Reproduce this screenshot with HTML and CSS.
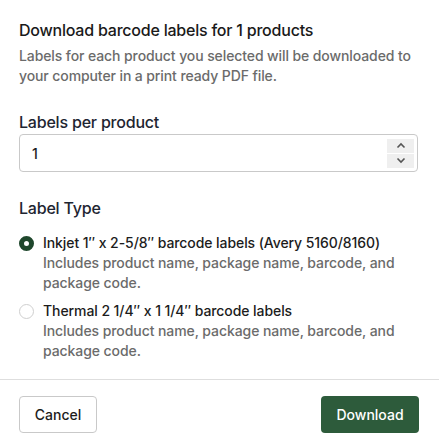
FILE: index.html
```html
<!DOCTYPE html>
<html lang="en">
<head>
  <meta charset="UTF-8" />
  <title>Download barcode labels</title>
  <link rel="stylesheet" href="styles.css">
</head>
<body>

  <div class="modal-body">
    <h2 class="title">Download barcode labels for 1 products</h2>
    <p class="subtitle">Labels for each product you selected will be downloaded to your computer in a print ready PDF file.</p>

    <!-- Quantidade de etiquetas -->
    <label class="field-label">Labels per product</label>
    <div class="number-field">
      <span class="number-value">1</span>
      <div class="spinner">
        <span class="spin-btn">
          <svg width="10" height="7" viewBox="0 0 10 7"><path d="M1.5 5.5 L5 2 L8.5 5.5" fill="none" stroke="#555" stroke-width="1.6"/></svg>
        </span>
        <span class="spin-btn">
          <svg width="10" height="7" viewBox="0 0 10 7"><path d="M1.5 1.5 L5 5 L8.5 1.5" fill="none" stroke="#555" stroke-width="1.6"/></svg>
        </span>
      </div>
    </div>

    <!-- Tipo de etiqueta -->
    <div class="field-label type-label">Label Type</div>
    <div class="options">
      <div class="option">
        <span class="radio checked"></span>
        <div class="option-text">
          <div class="option-title">Inkjet 1″ x 2-5/8″ barcode labels (Avery 5160/8160)</div>
          <div class="option-desc">Includes product name, package name, barcode, and package code.</div>
        </div>
      </div>
      <div class="option">
        <span class="radio"></span>
        <div class="option-text">
          <div class="option-title">Thermal 2 1/4″ x 1 1/4″ barcode labels</div>
          <div class="option-desc">Includes product name, package name, barcode, and package code.</div>
        </div>
      </div>
    </div>
  </div>

  <div class="modal-footer">
    <button class="btn btn-cancel">Cancel</button>
    <button class="btn btn-download">Download</button>
  </div>

</body>
</html>
```

FILE: styles.css
```css
body {
  margin: 0;
  font-family: Inter, "Liberation Sans", sans-serif;
  background: #fff;
  color: #1c1c1c;
}

.modal-body {
  padding: 18px 21px 18px 19px;
}

.title {
  margin: 0 0 4px;
  font-size: 16px;
  line-height: 24px;
  font-weight: 500;
  letter-spacing: -0.22px;
  color: #1a1a1a;
}

.subtitle {
  margin: 0 0 24px;
  font-size: 14px;
  line-height: 20px;
  font-weight: 500;
  letter-spacing: -0.1px;
  color: #6b6b6b;
}

.field-label {
  display: block;
  font-size: 16px;
  line-height: 24px;
  font-weight: 500;
  letter-spacing: -0.2px;
  color: #1e2531;
}

.type-label {
  margin-top: 24px;
}

.number-field {
  display: flex;
  align-items: center;
  justify-content: space-between;
  height: 38px;
  box-sizing: border-box;
  border: 1px solid #c9c9c9;
  border-radius: 4px;
  padding: 0 3px 0 12px;
}

.number-value {
  font-size: 14px;
  font-weight: 500;
  color: #1c1c1c;
}

.spinner {
  display: flex;
  flex-direction: column;
  gap: 1px;
}

.spin-btn {
  display: flex;
  align-items: center;
  justify-content: center;
  width: 27px;
  height: 14px;
  background: #efefef;
}

.options {
  margin-top: 13px;
  display: flex;
  flex-direction: column;
  gap: 8px;
}

.option {
  display: flex;
  gap: 9px;
}

.radio {
  flex: none;
  width: 15px;
  height: 15px;
  box-sizing: border-box;
  margin-top: 3px;
  border: 1px solid #cfcfcf;
  border-radius: 50%;
  background: #fff;
}

.radio.checked {
  border: 5px solid #1f472c;
}

.option-text {
  font-size: 14px;
  line-height: 20px;
  font-weight: 500;
  letter-spacing: -0.08px;
}

.option-title {
  color: #1c1c1c;
}

.option-desc {
  color: #6b6b6b;
}

.modal-footer {
  display: flex;
  justify-content: space-between;
  border-top: 1px solid #dedede;
  padding: 16px 20px 12px 19px;
}

.btn {
  height: 37px;
  font-family: inherit;
  font-size: 14px;
  font-weight: 500;
  border-radius: 4px;
  cursor: pointer;
}

.btn-cancel {
  width: 78px;
  background: #fff;
  color: #1c1c1c;
  border: 1px solid #c9c9c9;
}

.btn-download {
  width: 98px;
  background: #2d5b3b;
  color: #fff;
  border: none;
}
```
